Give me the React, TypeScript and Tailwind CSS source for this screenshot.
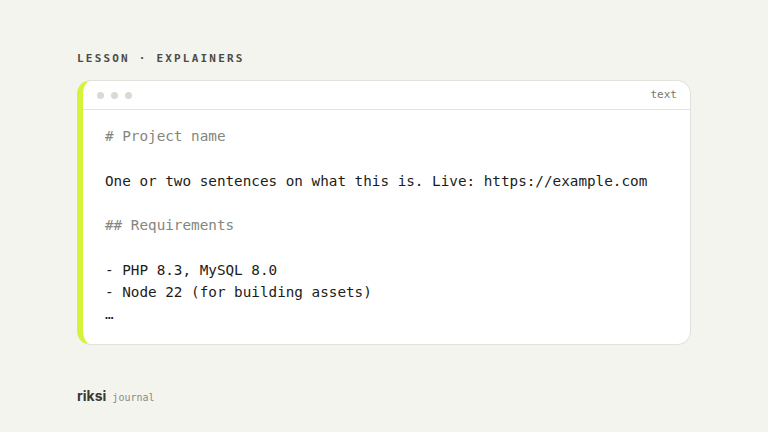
const mono = { fontFamily: '"DejaVu Sans Mono", "Liberation Mono", monospace' }

const lines: { text: string; muted?: boolean }[] = [
  { text: '# Project name', muted: true },
  { text: '' },
  { text: 'One or two sentences on what this is. Live: https://example.com' },
  { text: '' },
  { text: '## Requirements', muted: true },
  { text: '' },
  { text: '- PHP 8.3, MySQL 8.0' },
  { text: '- Node 22 (for building assets)' },
  { text: '…' },
]

export default function App() {
  return (
    <div className="w-[768px] h-[432px] bg-[#f4f4ef] flex flex-col px-[77px] pt-[53px]">
      <div
        className="text-[11px] font-bold tracking-[0.2em] text-[#4b4b46] leading-[12px]"
        style={mono}
      >
        LESSON · EXPLAINERS
      </div>

      <div className="mt-[15px] w-[614px] bg-white rounded-[14px] border border-[#e2e2dc] border-l-[6px] border-l-[#d6f33c] flex flex-col">
        <div className="h-[29px] flex items-center justify-between pl-[14px] pr-[13px] border-b border-[#e4e4de]">
          <div className="flex gap-[7px]">
            <span className="w-[7px] h-[7px] rounded-full bg-[#d9d9d6]" />
            <span className="w-[7px] h-[7px] rounded-full bg-[#d9d9d6]" />
            <span className="w-[7px] h-[7px] rounded-full bg-[#d9d9d6]" />
          </div>
          <span className="text-[11px] text-[#77776f]" style={mono}>
            text
          </span>
        </div>
        <div className="pl-[22px] pt-[15px] pb-[18px]" style={mono}>
          {lines.map((l, i) => (
            <div
              key={i}
              className={`text-[14.3px] leading-[22.3px] h-[22.3px] whitespace-pre ${
                l.muted ? 'text-[#85857e]' : 'text-[#1c1c1a]'
              }`}
            >
              {l.text}
            </div>
          ))}
        </div>
      </div>

      <div className="mt-auto mb-[26px] flex items-baseline gap-[6px]">
        <span
          className="text-[14px] font-bold text-[#3a3a36]"
          style={{ fontFamily: 'Inter, "Liberation Sans", sans-serif' }}
        >
          riksi
        </span>
        <span className="text-[10px] text-[#8a8a83]" style={mono}>
          journal
        </span>
      </div>
    </div>
  )
}
